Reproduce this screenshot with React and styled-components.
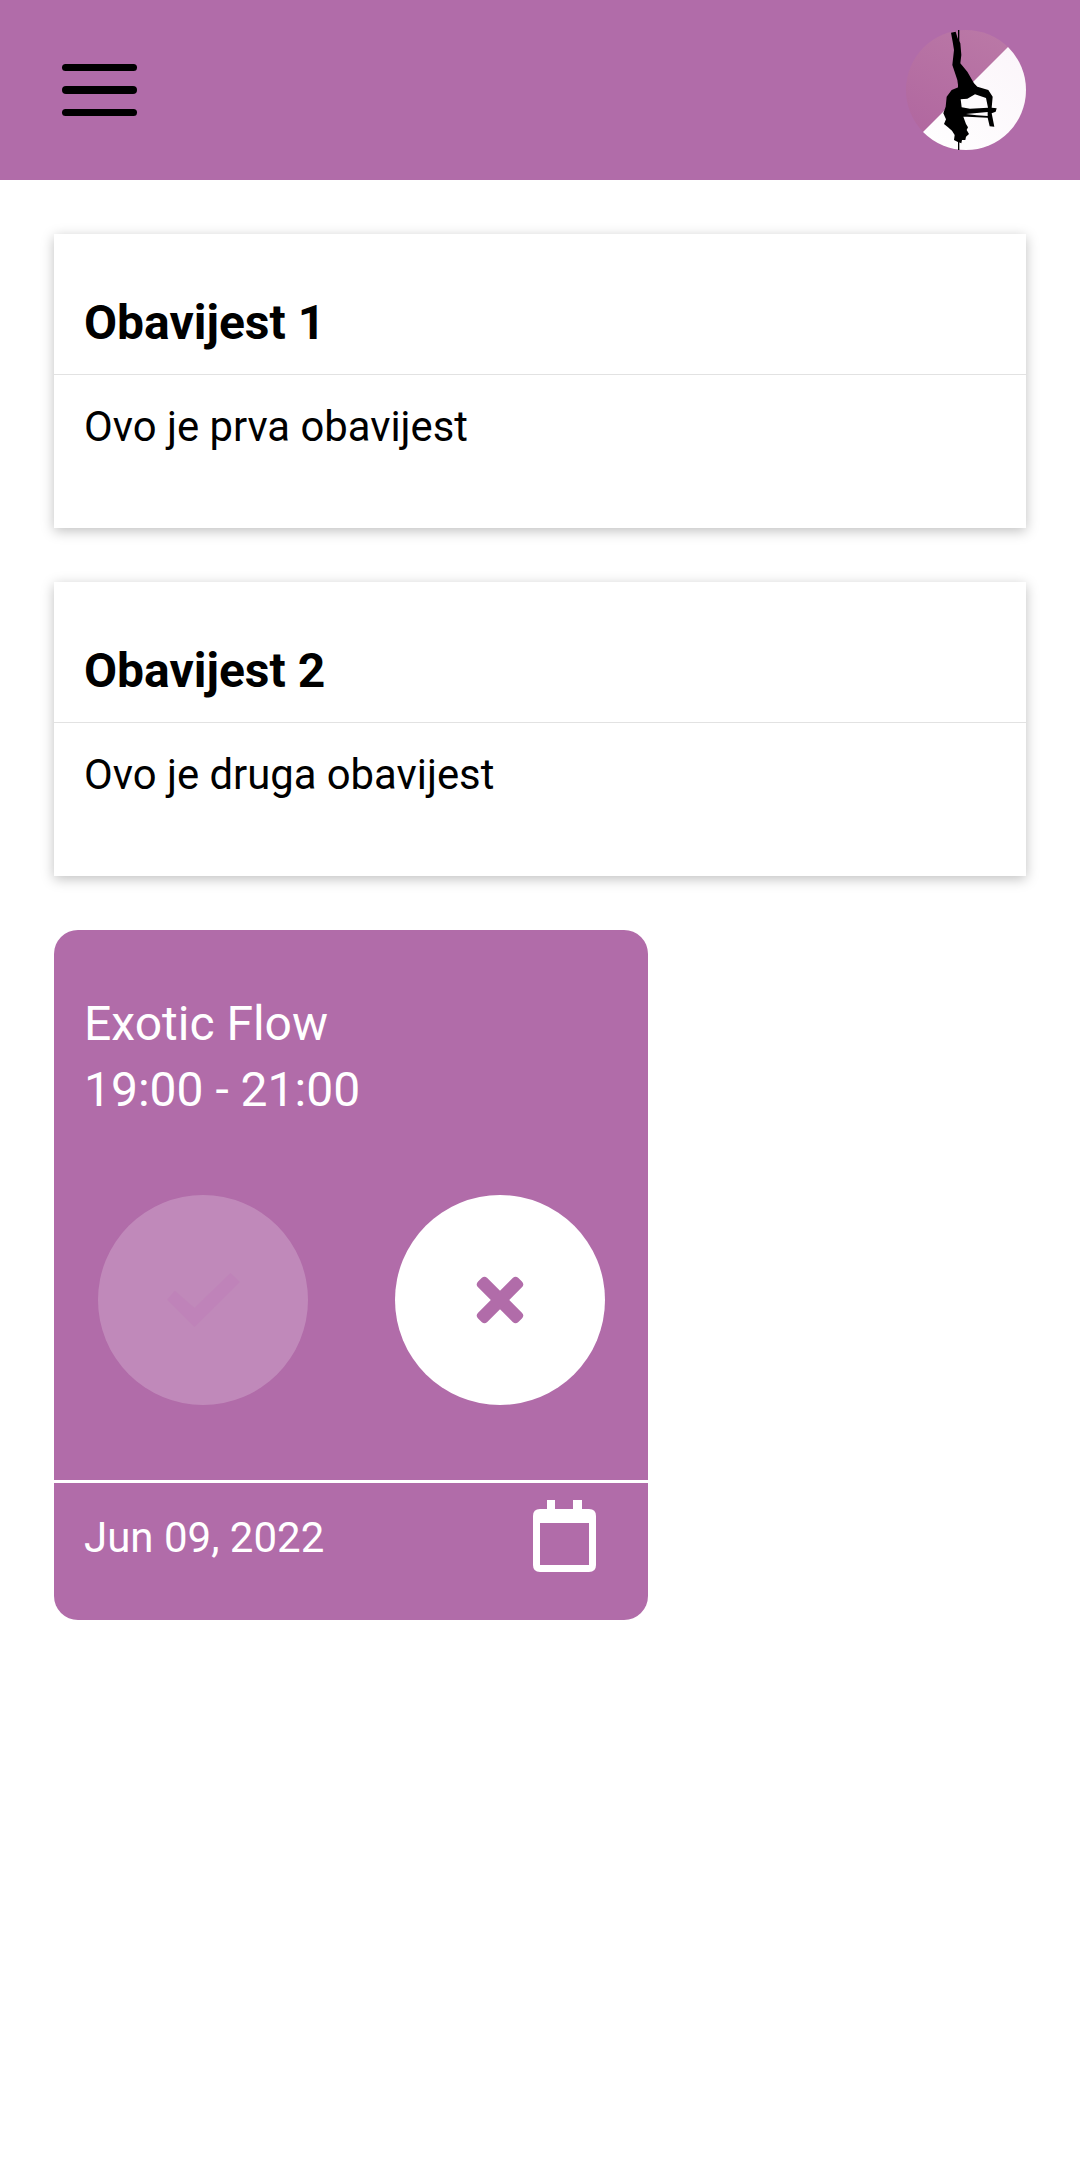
import React from 'react';
import styled, { createGlobalStyle } from 'styled-components';

const PURPLE = '#b16ca9';

const GlobalStyle = createGlobalStyle`
  html, body {
    margin: 0;
    background: #fff;
    font-family: 'Roboto', sans-serif;
  }
`;

const Header = styled.header`
  display: flex;
  justify-content: space-between;
  align-items: center;
  height: 180px;
  padding: 0 54px 0 62px;
  background-color: ${PURPLE};
`;

const Burger = styled.div`
  display: flex;
  flex-direction: column;
  gap: 15px;
  width: 75px;
`;

const BurgerBar = styled.span`
  display: block;
  height: 7.5px;
  border-radius: 4px;
  background: #000;
`;

const Main = styled.main`
  display: flex;
  flex-direction: column;
  gap: 54px;
  padding: 54px;
`;

const Notice = styled.section`
  height: 294px;
  background: #fff;
  box-shadow: 0 3px 12px rgba(0, 0, 0, 0.25);
`;

const NoticeTitle = styled.h2`
  display: flex;
  align-items: flex-end;
  box-sizing: border-box;
  height: 141px;
  margin: 0;
  padding: 0 30px 21px;
  border-bottom: 1px solid #e2e2e2;
  font-size: 48px;
  line-height: 60px;
  font-weight: 700;
  color: #000;
`;

const NoticeBody = styled.p`
  margin: 0;
  padding: 26px 30px;
  font-size: 41.8px;
  line-height: 52px;
  color: #000;
`;

const EventCard = styled.section`
  display: flex;
  flex-direction: column;
  width: 594px;
  height: 690px;
  border-radius: 24px;
  background-color: ${PURPLE};
  color: #fff;
`;

const EventTitle = styled.div`
  padding: 61px 30px 0;
  font-size: 48px;
  line-height: 66px;
`;

const Actions = styled.div`
  display: flex;
  justify-content: space-between;
  margin-top: 72px;
  padding: 0 43px 0 44px;
`;

const RoundButton = styled.button`
  display: flex;
  justify-content: center;
  align-items: center;
  width: 210px;
  height: 210px;
  padding: 0;
  border: 0;
  border-radius: 50%;
  background: ${(p) => (p.disabled ? 'rgba(255, 255, 255, 0.2)' : '#fff')};
`;

const Footer = styled.footer`
  display: flex;
  justify-content: space-between;
  align-items: flex-start;
  margin-top: 75px;
  padding: 17px 52px 0 30px;
  border-top: 3px solid #fff;
`;

const DateLabel = styled.span`
  margin-top: 12px;
  font-size: 42px;
  line-height: 52px;
`;

const Logo = () => (
  <svg width="120" height="120" viewBox="78 90 360 360" style={{ overflow: 'visible' }}>
    <defs>
      <linearGradient id="logoTop" x1="0.7" y1="0" x2="0.2" y2="1">
        <stop offset="0" stopColor="#ba78a6" />
        <stop offset="1" stopColor="#b0669f" />
      </linearGradient>
      <linearGradient id="logoBottom" x1="0" y1="1" x2="1" y2="0">
        <stop offset="0" stopColor="#ffffff" />
        <stop offset="1" stopColor="#fbf5fa" />
      </linearGradient>
      <clipPath id="logoCircle">
        <circle cx="258" cy="270" r="180" />
      </clipPath>
    </defs>
    <g clipPath="url(#logoCircle)">
      <rect x="78" y="90" width="360" height="360" fill="url(#logoTop)" />
      <polygon points="120,405 390,135 460,135 460,460 120,460" fill="url(#logoBottom)" />
    </g>
    <rect x="234" y="90" width="4" height="360" fill="#000" />
    <path
      fillRule="evenodd"
      fill="#000"
      d="M213 98 L227 95 L233 115 L241 130 L244 165 L241 190 L262 215 L282 250 L292 260 L325 270 L338 290 L335 323 L350 325 L347 335 L335 340 L343 380 L329 379 L323 353 L262 350 L250 350 L258 372 L264 382 L260 390 L267 402 L258 410 L256 420 L246 420 L244 430 L232 425 L222 420 L224 405 L216 392 L204 382 L192 372 L198 358 L190 340 L197 320 L200 290 L215 270 L235 262 L232 240 L217 195 L222 150 L218 125 Z
         M242 298 L262 296 L285 283 L318 294 L324 323 L270 326 L245 322 Z
         M258 342 L323 336 L323 348 L290 346 Z"
    />
  </svg>
);

const CheckIcon = () => (
  <svg width="73" height="54" viewBox="380 308 218 162">
    <polygon points="403,361 462,413 570,308 598,335 462,470 380,388" fill="#bf83b9" />
  </svg>
);

const CloseIcon = () => (
  <svg width="50" height="50" viewBox="0 0 50 50">
    <rect x="-3.5" y="18.5" width="57" height="13" rx="4" fill={PURPLE} transform="rotate(45 25 25)" />
    <rect x="-3.5" y="18.5" width="57" height="13" rx="4" fill={PURPLE} transform="rotate(-45 25 25)" />
  </svg>
);

const CalendarIcon = () => (
  <svg width="63" height="72" viewBox="0 0 63 72">
    <path
      fill="#fff"
      fillRule="evenodd"
      d="M14 0 H22 V9 H40 V0 H49 V9 H56 Q63 9 63 16 V65 Q63 72 56 72 H7 Q0 72 0 65 V16 Q0 9 7 9 H14 Z M7 23 V65 H56 V23 Z"
    />
  </svg>
);

const App = () => (
  <>
    <GlobalStyle />
    <Header>
      <Burger>
        <BurgerBar />
        <BurgerBar />
        <BurgerBar />
      </Burger>
      <Logo />
    </Header>
    <Main>
      <Notice>
        <NoticeTitle>Obavijest 1</NoticeTitle>
        <NoticeBody>Ovo je prva obavijest</NoticeBody>
      </Notice>
      <Notice>
        <NoticeTitle>Obavijest 2</NoticeTitle>
        <NoticeBody>Ovo je druga obavijest</NoticeBody>
      </Notice>
      <EventCard>
        <EventTitle>
          Exotic Flow
          <br />
          19:00 - 21:00
        </EventTitle>
        <Actions>
          <RoundButton disabled>
            <CheckIcon />
          </RoundButton>
          <RoundButton>
            <CloseIcon />
          </RoundButton>
        </Actions>
        <Footer>
          <DateLabel>Jun 09, 2022</DateLabel>
          <CalendarIcon />
        </Footer>
      </EventCard>
    </Main>
  </>
);

export default App;
